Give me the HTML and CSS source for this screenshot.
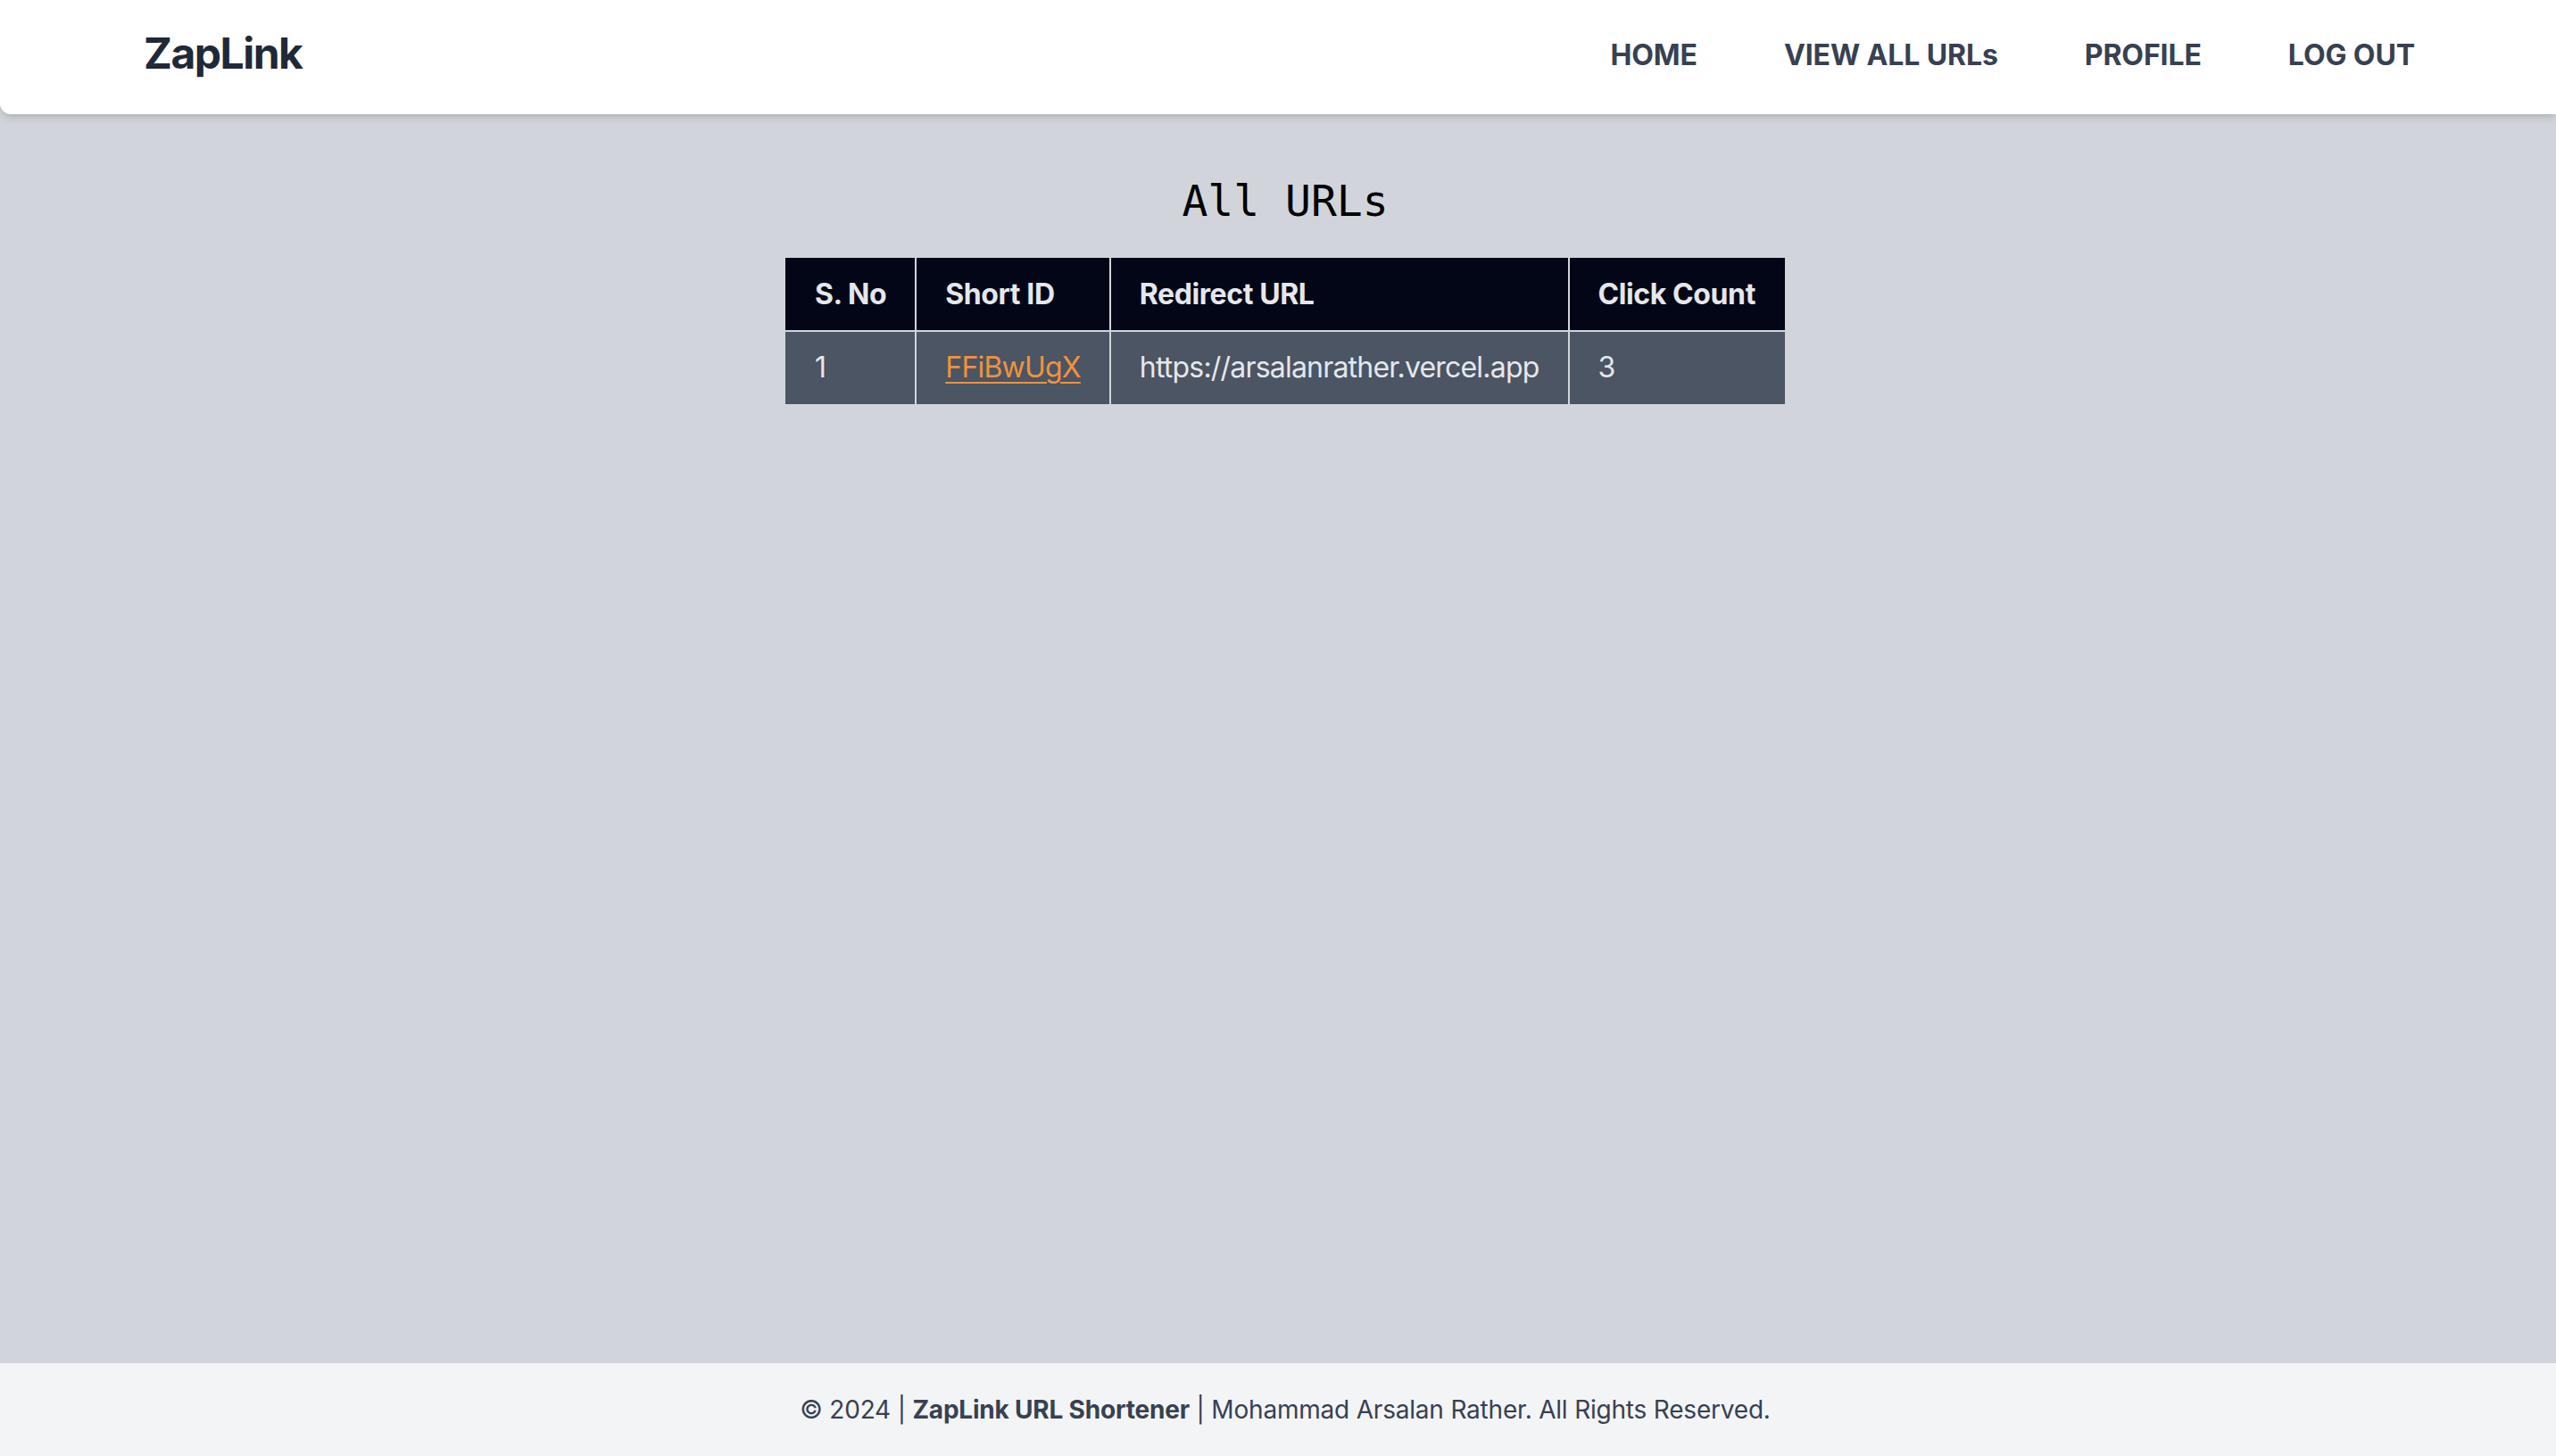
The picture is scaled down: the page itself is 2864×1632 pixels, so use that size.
FILE: index.html
```html
<!DOCTYPE html>
<html lang="en">
<head>
<meta charset="utf-8">
<title>ZapLink - All URLs</title>
<link rel="stylesheet" href="styles.css">
</head>
<body>
<div class="page">
  <header class="topbar">
    <a class="logo" href="#">ZapLink</a>
    <nav class="nav">
      <a href="#">HOME</a>
      <a href="#">VIEW ALL URLs</a>
      <a href="#">PROFILE</a>
      <a href="#">LOG OUT</a>
    </nav>
  </header>
  <main class="content">
    <h1 class="title">All URLs</h1>
    <table class="urls">
      <thead>
        <tr>
          <th>S. No</th>
          <th>Short ID</th>
          <th>Redirect URL</th>
          <th>Click Count</th>
        </tr>
      </thead>
      <tbody>
        <tr>
          <td>1</td>
          <td><a class="short" href="#">FFiBwUgX</a></td>
          <td>https://arsalanrather.vercel.app</td>
          <td>3</td>
        </tr>
      </tbody>
    </table>
  </main>
  <footer class="footer">
    <p>© 2024 | <strong>ZapLink URL Shortener</strong> | Mohammad Arsalan Rather. All Rights Reserved.</p>
  </footer>
</div>
</body>
</html>
```

FILE: styles.css
```css
* { box-sizing: border-box; }
html, body { margin: 0; padding: 0; }
body {
  font-family: Inter, "Noto Sans", "Liberation Sans", sans-serif;
  background: #d1d5db;
  color: #374151;
  overflow: hidden;
}
.page {
  min-height: 100vh;
  display: flex;
  flex-direction: column;
}
.topbar {
  height: 128px;
  background: #ffffff;
  border-radius: 0 0 0 12px;
  box-shadow: 0 6px 10px -2px rgba(0,0,0,0.12), 0 3px 5px -2px rgba(0,0,0,0.08);
  display: flex;
  align-items: flex-start;
  justify-content: space-between;
  padding: 28px 158px 0 161px;
  position: relative;
  z-index: 1;
}
.logo {
  font-size: 48px;
  line-height: 64px;
  font-weight: 700;
  color: #1f2937;
  text-decoration: none;
  letter-spacing: -1.5px;
}
.nav {
  display: flex;
  gap: 97px;
  padding-top: 14px;
}
.nav a {
  font-size: 32px;
  line-height: 40px;
  font-weight: 700;
  color: #374151;
  text-decoration: none;
  letter-spacing: -0.1px;
}
.content {
  flex: 1;
  display: flex;
  flex-direction: column;
  align-items: center;
  padding: 65px 0 0 16px;
}
.title {
  margin: 0 0 31px;
  font-family: "DejaVu Sans Mono", "Liberation Mono", monospace;
  font-size: 48px;
  line-height: 64px;
  font-weight: 400;
  color: #000000;
}
.urls {
  border-collapse: collapse;
  font-size: 32px;
  line-height: 48px;
}
.urls th, .urls td {
  border: 2px solid #d1d5db;
  padding: 16px 32px;
  text-align: left;
  white-space: nowrap;
}
.urls th {
  background: #030616;
  color: #e5e7eb;
  font-weight: 700;
  letter-spacing: -0.4px;
}
.urls td {
  background: #4b5563;
  color: #e5e7eb;
  font-weight: 400;
  letter-spacing: -0.8px;
}
.urls tr:first-child th { border-top-color: transparent; }
.urls th:first-child, .urls td:first-child { border-left-color: transparent; }
.urls th:last-child, .urls td:last-child { border-right-color: transparent; }
.urls tbody tr:last-child td { border-bottom-color: transparent; }
.short {
  color: #f0923e;
  text-decoration: underline;
  text-underline-offset: 5px;
  text-decoration-thickness: 2px;
}
.footer {
  background: #f3f4f6;
  height: 104px;
  display: flex;
  align-items: center;
  justify-content: center;
  padding-left: 16px;
}
.footer p {
  margin: 0;
  font-size: 28px;
  line-height: 40px;
  color: #374151;
  letter-spacing: -0.2px;
}
.footer strong { font-weight: 700; }
```
